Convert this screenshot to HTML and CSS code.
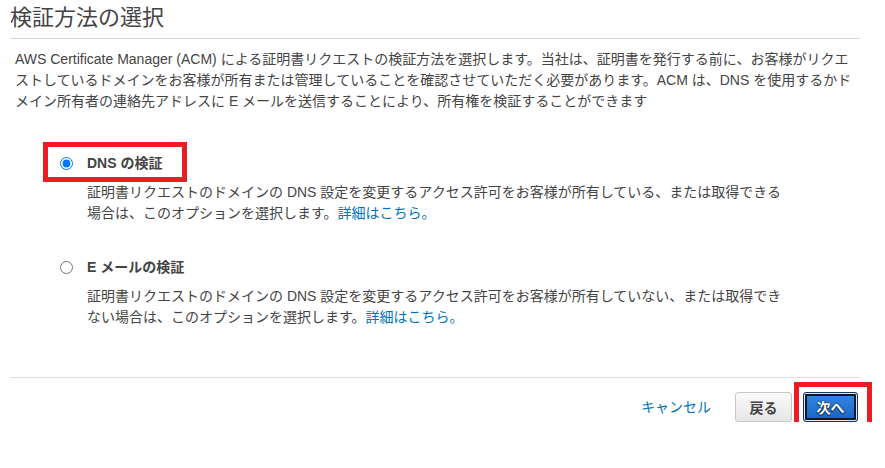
FILE: index.html
```html
<!DOCTYPE html>
<html lang="ja">
<head>
    <meta charset="UTF-8">
    <meta name="viewport" content="width=device-width, initial-scale=1.0">
    <title>検証方法の選択</title>
    <link rel="stylesheet" href="styles.css">
</head>
<body>
    <div class="page">
        <h1 class="page-title">検証方法の選択</h1>
        <p class="intro">AWS Certificate Manager (ACM) による証明書リクエストの検証方法を選択します。当社は、証明書を発行する前に、お客様がリクエストしているドメインをお客様が所有または管理していることを確認させていただく必要があります。ACM は、DNS を使用するかドメイン所有者の連絡先アドレスに E メールを送信することにより、所有権を検証することができます</p>

        <div class="options">
            <div class="option option-dns">
                <span class="mark mark-dns"></span>
                <input type="radio" name="method" id="method-dns" class="option-radio" checked>
                <label for="method-dns" class="option-label">DNS の検証</label>
                <p class="option-desc">証明書リクエストのドメインの DNS 設定を変更するアクセス許可をお客様が所有している、または取得できる場合は、このオプションを選択します。<a href="#">詳細はこちら。</a></p>
            </div>
            <div class="option option-email">
                <input type="radio" name="method" id="method-email" class="option-radio">
                <label for="method-email" class="option-label">E メールの検証</label>
                <p class="option-desc">証明書リクエストのドメインの DNS 設定を変更するアクセス許可をお客様が所有していない、または取得できない場合は、このオプションを選択します。<a href="#">詳細はこちら。</a></p>
            </div>
        </div>

        <div class="actions">
            <a href="#" class="cancel-link">キャンセル</a>
            <button class="btn btn-back">戻る</button>
            <div class="next-wrap">
                <span class="mark mark-next"></span>
                <button class="btn btn-next">次へ</button>
            </div>
        </div>
    </div>
</body>
</html>
```

FILE: styles.css
```css
body {
    margin: 0;
    padding: 0;
    background: #fff;
    color: #444;
    font-family: "Liberation Sans", "Noto Sans CJK JP", sans-serif;
    font-size: 14px;
}

.page {
    width: 850px;
    margin-left: 10px;
}

.page-title {
    margin: 0;
    padding: 5px 0 7px;
    font-size: 22px;
    line-height: 26px;
    font-weight: normal;
    color: #444;
    border-bottom: 1px solid #d5d5d5;
}

.intro {
    margin: 10px 0 0;
    padding-left: 5px;
    width: 845px;
    line-height: 21px;
}

.options {
    padding-top: 41px;
    padding-left: 50px;
}

.option {
    position: relative;
    display: grid;
    grid-template-columns: 27px 700px;
    align-items: center;
}

.option-email {
    margin-top: 33px;
}

.option-radio {
    margin: 0;
    width: 13px;
    height: 13px;
}

.option-label {
    font-weight: bold;
    line-height: 20px;
    color: #444;
}

.option-desc {
    grid-column: 2;
    margin: 9px 0 0;
    line-height: 21px;
}

.option-desc a {
    color: #0073bb;
    text-decoration: none;
}

.actions {
    margin-top: 49px;
    padding-top: 14px;
    border-top: 1px solid #dcdcdc;
    display: flex;
    justify-content: flex-end;
    align-items: center;
    padding-right: 2px;
}

.cancel-link {
    color: #0073bb;
    text-decoration: none;
    line-height: 30px;
    margin-right: 24px;
}

.btn {
    height: 30px;
    border-radius: 3px;
    font-family: inherit;
    font-size: 14px;
    font-weight: bold;
    cursor: pointer;
}

.btn-back {
    padding: 0 13.5px;
    border: 1px solid #c7c7c7;
    background: linear-gradient(#fafafa, #e6e6e6);
    color: #444;
    margin-right: 11px;
}

.next-wrap {
    position: relative;
}

.btn-next {
    display: block;
    padding: 0 12.5px;
    border: 1px solid #16365a;
    background: linear-gradient(#3189e2, #1963c2);
    color: #fff;
    box-shadow: inset 0 0 0 1px #dfe8f2, inset 0 0 0 3px #0c1826;
    text-shadow: 0 0 2px #0b1b2e, 0 1px 1px #0b1b2e;
}

.mark {
    position: absolute;
    box-sizing: border-box;
    border: 5px solid #ea1c24;
    pointer-events: none;
}

.mark-dns {
    left: -17px;
    top: -11px;
    width: 144px;
    height: 40px;
}

.mark-next {
    left: -9px;
    top: -10px;
    width: 78px;
    height: 50px;
}
```
